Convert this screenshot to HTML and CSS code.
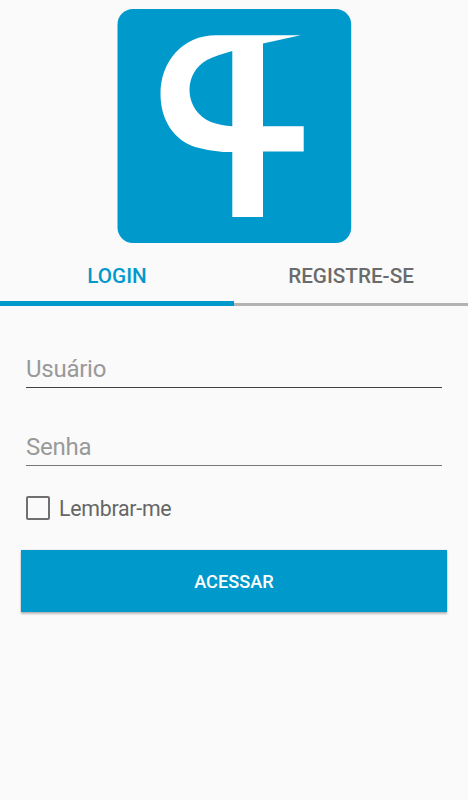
FILE: index.html
```
<!DOCTYPE html>
<html lang="pt-BR">
<head>
<meta charset="utf-8">
<title>Login</title>
<link rel="stylesheet" href="styles.css">
</head>
<body>
<main class="screen">
  <svg class="logo" viewBox="0 0 250 250" aria-hidden="true">
    <rect class="logo-bg" x="7.5" y="9" width="233.7" height="234" rx="15.5"/>
    <path class="logo-mark" fill-rule="evenodd" d="M106 35.200H190.500L153 43.500V126.200H193.700V151.500H153V217H122.300V152H113Q99 151 85 147C64 140 50.500 120 50.500 94C50.500 61 73 35.200 106 35.200ZM122.300 51C113 53.500 105 56 97 60C86 66 79.500 77 79.500 90C79.500 104 88 117 101 122Q110 125.500 122.300 126.300Z"/>
  </svg>
  <nav class="tabs">
    <a class="tab active"><span>LOGIN</span></a>
    <a class="tab"><span>REGISTRE-SE</span></a>
  </nav>
  <form class="form">
    <input class="field user" type="text" placeholder="Usuário">
    <input class="field password" type="password" placeholder="Senha">
    <label class="remember"><input class="check" type="checkbox"><span>Lembrar-me</span></label>
    <button class="submit" type="button">ACESSAR</button>
  </form>
</main>
</body>
</html>
```
FILE: styles.css
```
* { box-sizing: border-box; }
body { margin: 0; background: #fafafa; font-family: Roboto, sans-serif; }
.screen { width: 468px; height: 800px; display: flex; flex-direction: column; overflow: hidden; }
.logo { display: block; width: 250px; height: 250px; margin-left: 110px; flex: none; }
.logo-bg { fill: #0099cc; }
.logo-mark { fill: #fff; }
.tabs { display: grid; grid-template-columns: 1fr 1fr; height: 55.500px; }
.tab { display: flex; justify-content: center; padding-top: 14px; line-height: 25px; font-size: 20.700px; font-weight: 500; color: #6b6b6b; border-bottom: 3px solid #b3b3b3; }
.tab.active { color: #0099cc; border-bottom: 5px solid #0099cc; }
.form { display: flex; flex-direction: column; padding: 0 21px; }
.field { height: 38px; margin: 0 5px; padding: 1px 0 0; border: 0; border-bottom: 1px solid #404040; border-radius: 0; outline: 0; background: none; font: 24px Roboto, sans-serif; letter-spacing: -.25px; color: #333; }
.field::placeholder { color: #999; opacity: 1; }
.user { margin-top: 44px; }
.password { margin-top: 40px; border-bottom-color: #777; }
.remember { display: flex; align-items: center; gap: 9px; height: 28px; margin: 28px 5px 0; font-size: 21.300px; letter-spacing: -.25px; color: #666; }
.remember span { padding-top: 2px; }
.check { appearance: none; width: 24px; height: 24px; margin: 0; border: 2px solid #707070; border-radius: 2px; }
.submit { height: 62px; margin-top: 28px; padding: 2px 0 0; border: 0; background: #0099cc; color: #fff; font: 500 18.200px Roboto, sans-serif; box-shadow: 0 2px 2px rgba(0, 0, 0, .26), 0 0 1px rgba(0, 0, 0, .25); }
```
